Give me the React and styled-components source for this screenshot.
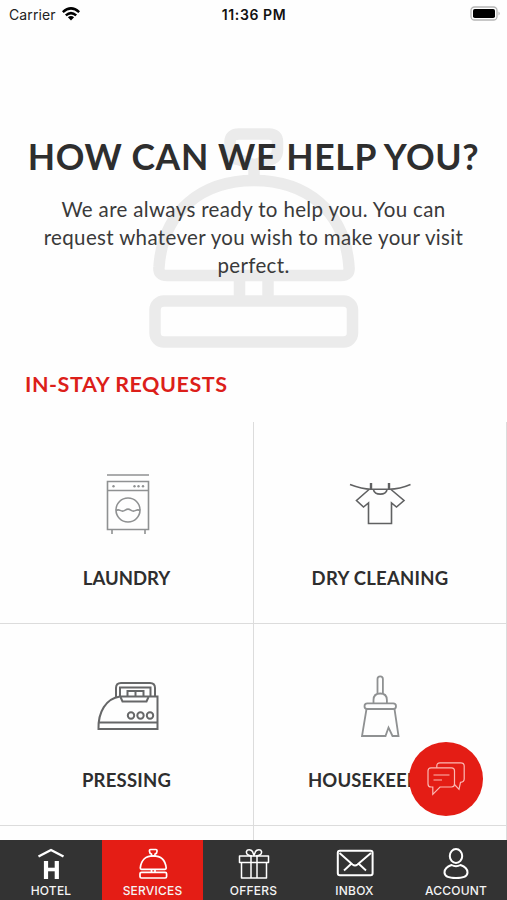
import React from "react";
import styled, { createGlobalStyle } from "styled-components";

const GlobalStyle = createGlobalStyle`
  * {
    box-sizing: border-box;
  }
  body {
    margin: 0;
    background: #fff;
  }
`;

const Screen = styled.div`
  position: relative;
  width: 507px;
  height: 900px;
  display: flex;
  flex-direction: column;
  overflow: hidden;
  background: #fefefe;
  color: #2e2e2e;
  font-family: Lato, sans-serif;
`;

const StatusBar = styled.header`
  flex: none;
  height: 28px;
  display: grid;
  grid-template-columns: 1fr auto 1fr;
  align-items: center;
  padding: 0 6px 0 9px;
  font-family: Inter, sans-serif;
  font-size: 14px;
  color: #222;
`;

const Carrier = styled.div`
  display: flex;
  align-items: center;
  gap: 6px;
  letter-spacing: 0.1px;
`;

const Time = styled.div`
  margin-right: 2px;
  font-weight: 600;
  letter-spacing: 0.6px;
  color: #111;
`;

const Battery = styled.svg`
  justify-self: end;
  display: block;
`;

const Hero = styled.section`
  position: relative;
  flex: none;
  height: 337px;
  padding-top: 107px;
  text-align: center;
`;

const HeroBell = styled.svg`
  position: absolute;
  left: 147px;
  top: 97px;
`;

const Title = styled.h1`
  position: relative;
  margin: 0;
  font-size: 35.5px;
  line-height: 44px;
  font-weight: 700;
  letter-spacing: 0.65px;
  white-space: nowrap;
`;

const Intro = styled.p`
  position: relative;
  margin: 16px auto 0;
  width: 440px;
  font-size: 20.5px;
  line-height: 28px;
  letter-spacing: 0.35px;
  color: #3a3a3a;
`;

const SectionTitle = styled.h2`
  flex: none;
  height: 57px;
  margin: 0;
  padding: 5px 0 0 25px;
  font-size: 21.5px;
  line-height: 28px;
  font-weight: 700;
  letter-spacing: 0.55px;
  color: #dc1f1a;
`;

const Grid = styled.div`
  flex: none;
  display: grid;
  grid-template-columns: 254px 253px;
  grid-auto-rows: 202px;
`;

const Cell = styled.div`
  display: flex;
  flex-direction: column;
  align-items: center;
  padding-top: 45px;
  border-right: 1px solid #dcdcdc;
  border-bottom: 1px solid #dcdcdc;
`;

const CellLabel = styled.div`
  margin-top: 23px;
  font-size: 18.5px;
  line-height: 24px;
  font-weight: 700;
  letter-spacing: ${({ $spacing }) => $spacing || 0}px;
  white-space: nowrap;
`;

const ChatButton = styled.button`
  position: absolute;
  left: 409px;
  top: 742px;
  width: 74px;
  height: 74px;
  display: flex;
  align-items: center;
  justify-content: center;
  border: 0;
  border-radius: 50%;
  padding: 0;
  background: #e41d15;
`;

const TabBar = styled.nav`
  position: absolute;
  left: 0;
  right: 0;
  bottom: 0;
  height: 60px;
  display: grid;
  grid-template-columns: 102px repeat(3, 101px) 102px;
  background: #333;
`;

const Tab = styled.div`
  display: flex;
  flex-direction: column;
  align-items: center;
  padding-top: 7px;
  background: ${({ $active }) => ($active ? "#e41d15" : "transparent")};
  color: #f4f4f4;
  font-family: Inter, sans-serif;
  font-size: 12px;
  line-height: 16px;
  font-weight: 500;
  letter-spacing: ${({ $spacing }) => $spacing || 0}px;
`;

const TabIcon = styled.svg`
  display: block;
  margin-bottom: 3px;
  fill: none;
  stroke: #fff;
  stroke-width: ${({ $weight }) => $weight || 1.7};
  stroke-linejoin: round;
`;

const CellIcon = styled.svg`
  display: block;
  fill: none;
  stroke: ${({ $color }) => $color};
  stroke-width: ${({ $weight }) => $weight};
`;

const WasherIcon = () => (
  <CellIcon width="76" height="76" $color="#8f9192" $weight="1.6">
    <path d="M18 8H60" />
    <path d="M18.5 14.5H59.5V62.5H18.5ZM18.5 23.5H59.5M23 63V67M56 63V67" />
    <circle cx="39" cy="43" r="12" />
    <path d="M27 43.5c3-2 4 .6 6.500.6s3-2 5.500-2 3 2 5.500 2 3.500-2.600 6.500-.6" />
    <g fill="#8f9192" stroke="none">
      <circle cx="24.5" cy="19.2" r="1.2" />
      <circle cx="45.5" cy="19.2" r="1.2" />
      <circle cx="49.5" cy="19.2" r="1.2" />
      <circle cx="54" cy="19.2" r="1.2" />
    </g>
  </CellIcon>
);

const ShirtIcon = () => (
  <CellIcon width="76" height="76" $color="#606162" $weight="1.6">
    <path d="M8 17.5Q20 22 29 22.300H47Q58 22 68.500 17.500" />
    <path d="M29 16V22.500M47 16V22.500" strokeWidth="2.4" />
    <path d="M27 22.5L14.5 33.500 21.5 40 26.5 36V56.5H49.5V36L54.5 40 62 33.500 49 22.5" />
    <path d="M31.5 23C33 28.5 43.5 28.5 45 23" />
  </CellIcon>
);

const IronIcon = () => (
  <CellIcon width="76" height="76" viewBox="0 1 76 76" $color="#666768" $weight="2">
    <path d="M68.5 28.5V61H9.5C9 44 17 30.5 31 28.5ZM9.5 54.5H68.5" />
    <path d="M27 29V20q0-5 5-5H61q5 0 5 5v8.500M31 28.5V19.5H61.5V28.5" />
    <path d="M31.5 29L33.5 33.5H57.5L59.5 29" />
    <path d="M38.5 28V23H54.5V28M46.5 23V28" />
    <circle cx="42" cy="47.5" r="3.2" />
    <circle cx="51.5" cy="47.5" r="3.2" />
    <circle cx="61" cy="47.5" r="3.2" />
  </CellIcon>
);

const BrushIcon = () => (
  <CellIcon width="76" height="76" viewBox="0 1.5 76 76" $color="#8f9192" $weight="1.8">
    <path d="M35.5 26V11.500q0-2.700 2.700-2.700t2.700 2.700V26" />
    <path d="M31.5 35.5V32.500q0-6.500 6.700-6.500t6.700 6.500v3" />
    <rect x="22.5" y="35.8" width="31.5" height="5.7" rx="2.85" />
    <path d="M24.5 41.5L20 68.5H43.5L46.5 60 50.5 68.5H56.5L52.5 41.5" />
  </CellIcon>
);

const ChatIcon = () => (
  <svg width="40" height="34" fill="none" stroke="#fbb9b4" strokeWidth="1.2">
    <path d="M10.8 5.800V4Q10.800 .8 14 .8H35Q38.200 .8 38.200 4V17Q38.200 20 34.500 20.300L33 27.300 28.500 22.500" />
    <path d="M5 5.8H25.500Q28.500 5.800 28.500 8.800V22Q28.500 25 25.500 25H14L6.800 32.300V25H5Q2 25 2 22V8.800Q2 5.800 5 5.800Z" />
    <path d="M7.500 13H23.500M7.500 18H16" />
  </svg>
);

const HotelIcon = () => (
  <TabIcon width="40" height="33">
    <path d="M7.5 9.5L20 3 32.5 9.5" strokeWidth="2.4" />
    <path d="M15 14V32M25.800 14V32" strokeWidth="4.2" />
    <path d="M15 22.500H25.800" strokeWidth="3.6" />
  </TabIcon>
);

const BellIcon = () => (
  <TabIcon width="40" height="33">
    <path d="M17.500 2.500h5.500q1 0 1 1v1q0 2-2 2.500v2h-3.500V7q-2-.5-2-2.500v-1q0-1 1-1z" />
    <path d="M7.300 21C8 13 13 8.800 20.200 8.800S32.400 13 33.200 21Q33.200 22.300 32 22.300H8.500Q7.300 22.300 7.300 21Z" />
    <path d="M18.5 22.300V25.300M22 22.300V25.300" />
    <rect x="7" y="25.3" width="26.6" height="5.7" rx="1.5" />
  </TabIcon>
);

const GiftIcon = () => (
  <TabIcon width="40" height="33" $weight="1.5">
    <path d="M5.5 9H34.5V15.5H5.5ZM7.5 15.5V31H32.5V15.5M17 9V31M23 9V31" />
    <path d="M18 9C14 9 12 7 12.5 4.5S17 2 18.5 4.5L20 8.5 21.5 4.5C23 2 27 2 27.5 4.5S26 9 22 9" />
  </TabIcon>
);

const MailIcon = () => (
  <TabIcon width="40" height="33" $weight="1.9">
    <rect x="2.8" y="3.8" width="34.8" height="24.4" rx="2" strokeWidth="2" />
    <path d="M4.500 6L17.500 17.500Q20 19.500 22.500 17.500L36 6M9 23.500L16 17M31 23.500L24 17" />
  </TabIcon>
);

const UserIcon = () => (
  <TabIcon width="40" height="33" $weight="2">
    <ellipse cx="20" cy="9" rx="6.2" ry="7" />
    <path d="M15.5 18C11 19.5 8.500 22 8.500 25.500C8.500 29 13 31 20 31S31.500 29 31.500 25.500C31.500 22 29 19.500 24.500 18Q20 20.500 15.500 18Z" />
  </TabIcon>
);

const services = [
  { name: "LAUNDRY", icon: WasherIcon, spacing: 0 },
  { name: "DRY CLEANING", icon: ShirtIcon, spacing: 0.25 },
  { name: "PRESSING", icon: IronIcon, spacing: 0.2 },
  { name: "HOUSEKEEPING", icon: BrushIcon, spacing: 0.15 },
  { name: "", icon: null },
  { name: "", icon: null },
];

const tabs = [
  { name: "HOTEL", icon: HotelIcon, spacing: 0.2 },
  { name: "SERVICES", icon: BellIcon, active: true, spacing: 0.2 },
  { name: "OFFERS", icon: GiftIcon, spacing: 0.2 },
  { name: "INBOX", icon: MailIcon, spacing: 0.2 },
  { name: "ACCOUNT", icon: UserIcon, spacing: 0.2 },
];

const App = () => {
  return (
    <>
      <GlobalStyle />
      <Screen>
        <StatusBar>
          <Carrier>
            Carrier
            <svg width="18" height="14" viewBox="0 0 18 14" fill="none" stroke="#000" strokeWidth="2.5">
              <path d="M.8 5.200Q9-2.400 17.200 5.200M3.800 8.400Q9 3.800 14.200 8.400" />
              <path d="M9 13.500L5.900 10.300Q9 7.800 12.100 10.300Z" fill="#000" stroke="none" />
            </svg>
          </Carrier>
          <Time>11:36 PM</Time>
          <Battery width="31" height="16">
            <rect x="1" y="1" width="26" height="13" rx="3.5" fill="#fff" stroke="#b5b5b5" strokeWidth="1.3" />
            <rect x="3" y="3" width="22" height="9" rx="1.8" fill="#000" />
            <path d="M28.5 5.5Q31 7.5 28.5 9.5Z" fill="#b5b5b5" />
          </Battery>
        </StatusBar>

        <Hero>
          <HeroBell width="214" height="228" viewBox="147 125 214 228" fill="none" stroke="#ebebeb" strokeWidth="11.5">
            <path d="M239 134H269Q277.500 134 277.500 142V150Q277.500 159 268 160L254 165 240 160Q230 159 230 150V142Q230 134 239 134Z" />
            <path d="M254 162V178" />
            <path d="M159 267C163 210 203 180.500 254 180.500S345 210 349 267Q350 275.500 341 275.500H167Q158 275.500 159 267Z" />
            <path d="M239.500 277V300M268 277V300" />
            <rect x="155" y="301" width="197.500" height="41" rx="9" />
          </HeroBell>
          <Title>HOW CAN WE HELP YOU?</Title>
          <Intro>
            We are always ready to help you. You can request whatever you wish
            to make your visit perfect.
          </Intro>
        </Hero>

        <SectionTitle>IN-STAY REQUESTS</SectionTitle>
        <Grid>
          {services.map(({ name, icon: Icon, spacing }, index) => (
            <Cell key={index}>
              {Icon && <Icon />}
              {name && <CellLabel $spacing={spacing}>{name}</CellLabel>}
            </Cell>
          ))}
        </Grid>

        <TabBar>
          {tabs.map(({ name, icon: Icon, active, spacing }) => (
            <Tab key={name} $active={active} $spacing={spacing}>
              <Icon />
              {name}
            </Tab>
          ))}
        </TabBar>

        <ChatButton aria-label="Chat">
          <ChatIcon />
        </ChatButton>
      </Screen>
    </>
  );
};

export default App;
